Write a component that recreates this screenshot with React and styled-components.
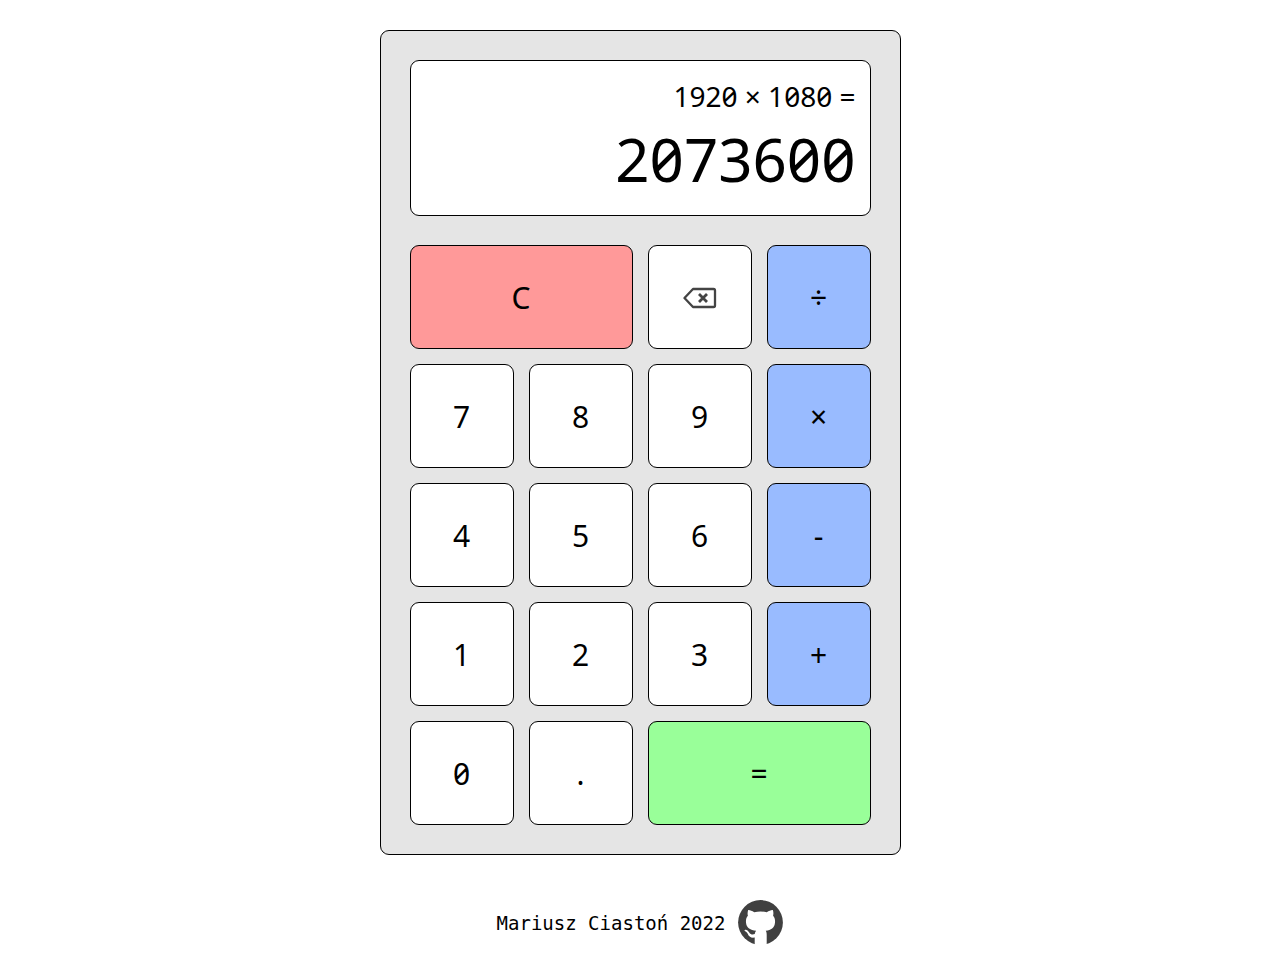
import React from "react";
import styled, { createGlobalStyle } from "styled-components";

const GlobalStyle = createGlobalStyle`
  *, *::before, *::after { box-sizing: border-box; }
  body {
    margin: 0;
    background: #fff;
    color: #000;
    font-family: "Noto Sans", sans-serif;
    font-feature-settings: "zero" 1;
  }
`;

const Page = styled.div`
  display: flex;
  flex-direction: column;
  align-items: center;
  gap: 45px;
  padding: 30px 16px 15px;
`;

const Calculator = styled.main`
  display: flex;
  flex-direction: column;
  gap: 29px;
  width: 100%;
  max-width: 521px;
  padding: 29px;
  background: #e5e5e5;
  border: 1px solid #000;
  border-radius: 9px;
`;

const Display = styled.output`
  display: block;
  padding: 15px 14px 13px;
  text-align: right;
  background: #fff;
  border: 1px solid #000;
  border-radius: 9px;
`;

const Expression = styled.div`
  font-size: 28px;
  line-height: 40px;
`;

const Result = styled.div`
  font-size: 60px;
  line-height: 86px;
`;

const Keypad = styled.div`
  display: grid;
  grid-template-columns: repeat(4, 1fr);
  grid-auto-rows: 104px;
  gap: 15px;
`;

const keyColors = {
  plain: "#fff",
  clear: "#ff9999",
  operator: "#99bbff",
  equals: "#99ff99",
};

const Key = styled.button`
  display: flex;
  align-items: center;
  justify-content: center;
  grid-column: span ${({ $span }) => $span || 1};
  padding: 2px 0 0;
  color: #000;
  background: ${({ $kind }) => keyColors[$kind || "plain"]};
  border: 1px solid #000;
  border-radius: 9px;
  font-family: inherit;
  font-feature-settings: inherit;
  font-size: 30px;
  line-height: 40px;
  cursor: pointer;
`;

const Footer = styled.footer`
  display: flex;
  align-items: center;
  gap: 13px;
  font-family: "DejaVu Sans Mono", monospace;
  font-size: 19px;
  line-height: 24px;
`;

const ProfileLink = styled.a`
  display: flex;
  color: #404040;
`;

function BackspaceIcon() {
  return (
    <svg width="34" height="22" viewBox="0 0 34 22" fill="none" stroke="#444" aria-hidden="true">
      <path d="M10 2H30.5Q32 2 32 3.5V18.5Q32 20 30.5 20H10L1.5 11Z" strokeWidth="2.3" strokeLinejoin="round" />
      <path d="M16 7L24 15M24 7L16 15" strokeWidth="2.8" />
    </svg>
  );
}

function GithubIcon() {
  return (
    <svg width="45" height="45" viewBox="0 0 45 45" aria-hidden="true">
      <circle cx="22.5" cy="22.5" r="22.4" fill="currentColor" />
      <path
        fill="#fff"
        d="M10.2 10C11.800 9.800 14 10.800 16.200 12.200Q22.500 10.800 28.800 12.200C31 10.800 33.200 9.800 34.800 10C35.600 12 35.500 14 35.100 15.800C37 18 37.300 20.500 36.900 23.200C36.300 28 33.200 30 27.700 30.700C28.500 31.800 28.700 33 28.700 34.700V45H16.700V37.600C12.800 38.200 10.900 36.600 9.700 33.800C9 32.200 7.900 31.600 6.700 30.700C6.100 30.100 6.700 29.700 7.500 29.800C9.100 29.900 10.200 31 11.200 32.500C12.600 34.600 14.500 35 16.800 34.100C16.900 32.700 17.300 31.600 18.200 30.700C12.200 30 8.700 28 8.100 23.200C7.700 20.500 8 18 9.900 15.800C9.400 14 9.500 12 10.200 10Z"
      />
    </svg>
  );
}

const keys = [
  { label: "C", kind: "clear", span: 2, name: "Clear" },
  { label: <BackspaceIcon />, name: "Backspace" },
  { label: "÷", kind: "operator" },
  { label: "7" },
  { label: "8" },
  { label: "9" },
  { label: "×", kind: "operator" },
  { label: "4" },
  { label: "5" },
  { label: "6" },
  { label: "-", kind: "operator" },
  { label: "1" },
  { label: "2" },
  { label: "3" },
  { label: "+", kind: "operator" },
  { label: "0" },
  { label: "." },
  { label: "=", kind: "equals", span: 2 },
];

export default function App() {
  return (
    <>
      <GlobalStyle />
      <Page>
        <Calculator>
          <Display>
            <Expression>1920 × 1080 =</Expression>
            <Result>2073600</Result>
          </Display>
          <Keypad>
            {keys.map(({ label, kind, span, name }, index) => (
              <Key key={index} type="button" $kind={kind} $span={span} aria-label={name}>
                {label}
              </Key>
            ))}
          </Keypad>
        </Calculator>
        <Footer>
          <span>Mariusz Ciastoń 2022</span>
          <ProfileLink href="#" aria-label="GitHub profile">
            <GithubIcon />
          </ProfileLink>
        </Footer>
      </Page>
    </>
  );
}
